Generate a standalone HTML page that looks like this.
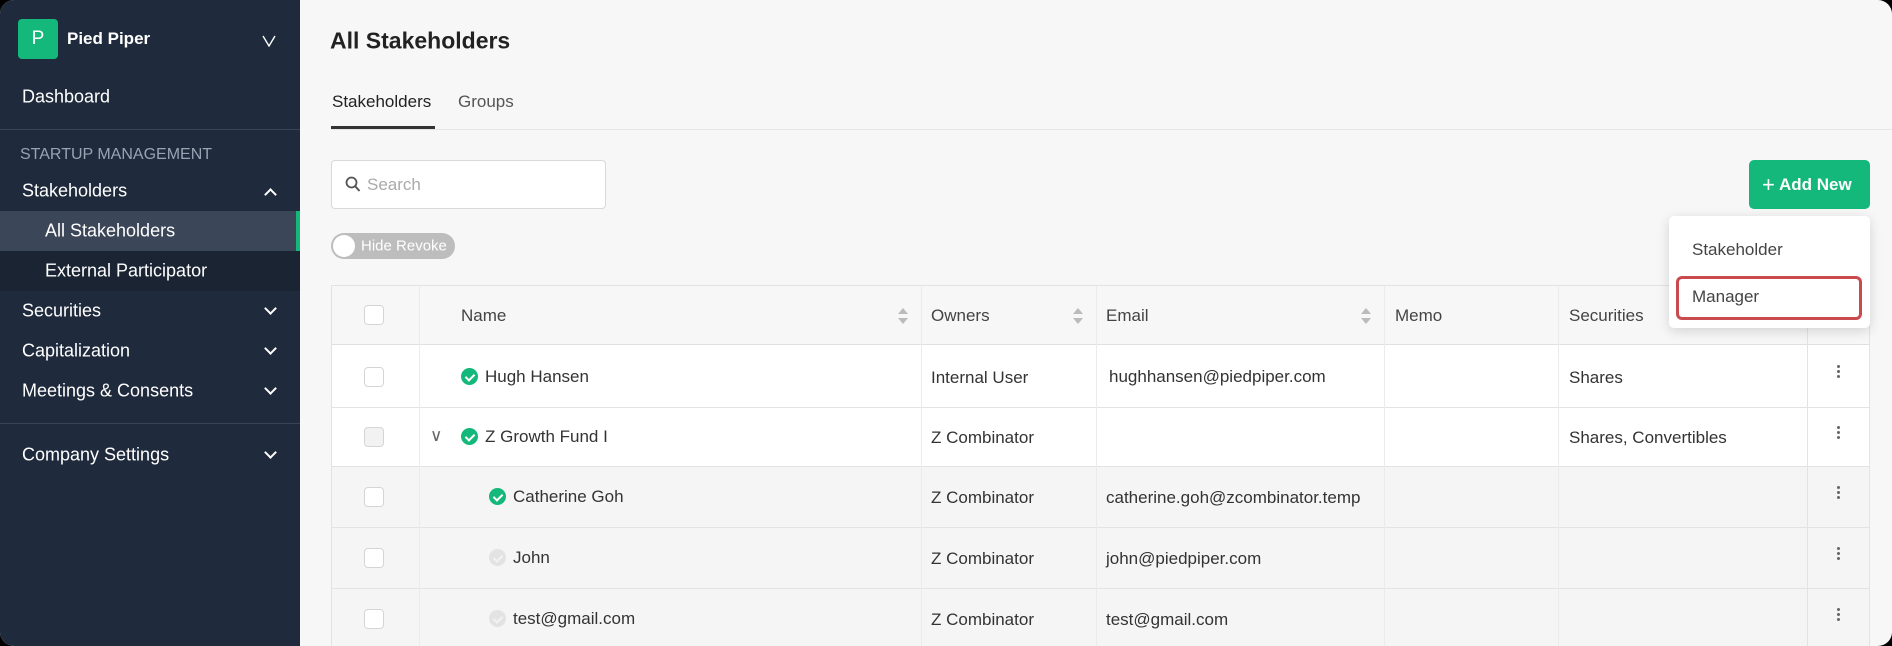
<!DOCTYPE html>
<html><head><meta charset="utf-8"><style>
*{box-sizing:border-box;margin:0;padding:0}
html,body{width:1892px;height:646px;overflow:hidden;background:#000}
body{font-family:"Liberation Sans",sans-serif;position:relative}
.win{position:absolute;left:0;top:0;width:1892px;height:646px;border-radius:14px;overflow:hidden;background:#f7f7f7}
.side{position:absolute;left:0;top:0;width:300px;height:646px;background:#1f2a3c;color:#fff}
.abs{position:absolute}
.si{position:absolute;left:22px;font-size:18px;color:#fff;transform:translateY(-50%)}
.chev{position:absolute;left:266px;width:9px;height:9px;border-right:2.5px solid #fff;border-bottom:2.5px solid #fff;transform:rotate(45deg)}
.chevu{transform:rotate(-135deg)}
.main{position:absolute;left:300px;top:0;right:0;bottom:0}
.t{position:absolute;transform:translateY(-50%);font-size:17px;color:#333;white-space:nowrap}
.cb{position:absolute;width:20px;height:20px;border:1px solid #d5d5d5;border-radius:4px;background:#fff}
.ok{display:inline-block;width:17px;height:17px;border-radius:50%;background:#14b87a;vertical-align:-3px;margin-right:7px;position:relative}
.ok:after{content:"";position:absolute;left:6px;top:3.5px;width:4px;height:7px;border-right:2px solid #fff;border-bottom:2px solid #fff;transform:rotate(45deg)}
.gr{background:#e3e3e3}
.gr:after{border-color:#f3f3f3}
.sort{position:absolute;width:8px;height:16px}
.sort:before{content:"";position:absolute;top:0;left:0;border:5px solid transparent;border-bottom:6px solid #bbb;border-top:0}
.sort:after{content:"";position:absolute;bottom:0;left:0;border:5px solid transparent;border-top:6px solid #bbb;border-bottom:0}
.dots{position:absolute;width:3px;height:3px;background:#666;border-radius:50%;box-shadow:0 5px 0 #666,0 10px 0 #666}
</style></head><body><div class="win">
<div class="side">
 <div class="abs" style="left:18px;top:19px;width:40px;height:40px;background:#14b87a;border-radius:4px;color:#fff;font-size:19px;line-height:40px;text-align:center">P</div>
 <div class="si" style="left:67px;top:39px;font-weight:bold;font-size:17px">Pied Piper</div>
 <svg class="abs" style="left:262px;top:35px" width="14" height="12" viewBox="0 0 14 12"><path d="M1 1l6 10 6-10" fill="none" stroke="#fff" stroke-width="1.4"/></svg>
 <div class="si" style="top:97px">Dashboard</div>
 <div class="abs" style="left:0;top:129px;width:300px;height:1px;background:#37445a"></div>
 <div class="si" style="top:155px;left:20px;font-size:16px;color:#9aa3b1">STARTUP MANAGEMENT</div>
 <div class="si" style="top:191px">Stakeholders</div><div class="chev chevu" style="top:190px"></div>
 <div class="abs" style="left:0;top:211px;width:300px;height:80px;background:#1a2433"></div>
 <div class="abs" style="left:0;top:211px;width:300px;height:40px;background:#3b4658"></div>
 <div class="abs" style="left:296px;top:211px;width:4px;height:40px;background:#14b87a"></div>
 <div class="si" style="left:45px;top:231px">All Stakeholders</div>
 <div class="si" style="left:45px;top:271px">External Participator</div>
 <div class="si" style="top:311px">Securities</div><div class="chev" style="top:304px"></div>
 <div class="si" style="top:351px">Capitalization</div><div class="chev" style="top:344px"></div>
 <div class="si" style="top:391px">Meetings &amp; Consents</div><div class="chev" style="top:384px"></div>
 <div class="abs" style="left:0;top:423px;width:300px;height:1px;background:#37445a"></div>
 <div class="si" style="top:455px">Company Settings</div><div class="chev" style="top:448px"></div>
</div>
<div class="main">
 <div class="t" style="left:30px;top:41px;font-size:23px;color:#222;font-weight:bold">All Stakeholders</div>
 <div class="t" style="left:32px;top:102px;color:#222">Stakeholders</div>
 <div class="t" style="left:158px;top:102px;color:#555">Groups</div>
 <div class="abs" style="left:31px;top:129px;width:1561px;height:1px;background:#e6e6e6"></div>
 <div class="abs" style="left:31px;top:126px;width:104px;height:3px;background:#333"></div>
 <div class="abs" style="left:31px;top:160px;width:275px;height:49px;background:#fff;border:1px solid #d9d9d9;border-radius:4px"></div>
 <svg class="abs" style="left:45px;top:176px" width="16" height="17" viewBox="0 0 16 17"><circle cx="6.5" cy="6.5" r="5" fill="none" stroke="#555" stroke-width="1.8"/><path d="M10 10l4.5 5" stroke="#555" stroke-width="2"/></svg>
 <div class="t" style="left:67px;top:185px;color:#aaa">Search</div>
 <div class="abs" style="left:31px;top:233px;width:124px;height:26px;background:#bdbdbd;border-radius:13px"></div>
 <div class="abs" style="left:33px;top:235px;width:22px;height:22px;background:#fff;border-radius:50%"></div>
 <div class="t" style="left:61px;top:246px;color:#fff;font-size:15px">Hide Revoke</div>
 <div class="abs" style="left:1449px;top:160px;width:121px;height:49px;background:#14b87a;border-radius:5px"></div>
 <div class="t" style="left:1462px;top:185px;color:#fff;font-weight:bold;font-size:17px"><span style="font-weight:normal;font-size:22px;vertical-align:-2px">+</span> Add New</div>
 <div class="abs" style="left:31px;top:285px;width:1539px;height:361px;background:#fff;border:1px solid #e3e3e3;border-bottom:0"></div>
 <div class="abs" style="left:32px;top:286px;width:1537px;height:59px;background:#f7f7f7;border-bottom:1px solid #e0e0e0"></div>
 <div class="abs" style="left:32px;top:466px;width:1537px;height:180px;background:#f5f5f5"></div>
 <div class="abs" style="left:32px;top:407px;width:1537px;height:1px;background:#e3e3e3"></div>
 <div class="abs" style="left:32px;top:466px;width:1537px;height:1px;background:#e3e3e3"></div>
 <div class="abs" style="left:32px;top:527px;width:1537px;height:1px;background:#e3e3e3"></div>
 <div class="abs" style="left:32px;top:588px;width:1537px;height:1px;background:#e3e3e3"></div>
 <div class="abs" style="left:119px;top:286px;width:1px;height:360px;background:#ebebeb"></div>
 <div class="abs" style="left:621px;top:286px;width:1px;height:360px;background:#ebebeb"></div>
 <div class="abs" style="left:796px;top:286px;width:1px;height:360px;background:#ebebeb"></div>
 <div class="abs" style="left:1084px;top:286px;width:1px;height:360px;background:#ebebeb"></div>
 <div class="abs" style="left:1258px;top:286px;width:1px;height:360px;background:#ebebeb"></div>
 <div class="abs" style="left:1507px;top:286px;width:1px;height:360px;background:#e3e3e3;box-shadow:-4px 0 8px rgba(0,0,0,.06)"></div>
 <div class="cb" style="left:64px;top:305px"></div>
 <div class="t" style="left:161px;top:316px;color:#444">Name</div><div class="sort" style="left:598px;top:308px"></div>
 <div class="t" style="left:631px;top:316px;color:#444">Owners</div><div class="sort" style="left:773px;top:308px"></div>
 <div class="t" style="left:806px;top:316px;color:#444">Email</div><div class="sort" style="left:1061px;top:308px"></div>
 <div class="t" style="left:1095px;top:316px;color:#444">Memo</div>
 <div class="t" style="left:1269px;top:316px;color:#444">Securities</div>
 <div class="cb" style="left:64px;top:367px"></div>
 <div class="t" style="left:161px;top:377px"><span class="ok"></span>Hugh Hansen</div>
 <div class="t" style="left:631px;top:378px">Internal User</div>
 <div class="t" style="left:809px;top:377px">hughhansen@piedpiper.com</div>
 <div class="t" style="left:1269px;top:378px">Shares</div>
 <div class="dots" style="left:1537px;top:365px"></div>
 <div class="cb" style="left:64px;top:427px;background:#f2f2f2"></div>
 <div class="t" style="left:130px;top:436px;color:#666">∨</div>
 <div class="t" style="left:161px;top:437px"><span class="ok"></span>Z Growth Fund I</div>
 <div class="t" style="left:631px;top:438px">Z Combinator</div>
 <div class="t" style="left:1269px;top:438px">Shares, Convertibles</div>
 <div class="dots" style="left:1537px;top:426px"></div>
 <div class="cb" style="left:64px;top:487px"></div>
 <div class="t" style="left:189px;top:497px"><span class="ok"></span>Catherine Goh</div>
 <div class="t" style="left:631px;top:498px">Z Combinator</div>
 <div class="t" style="left:806px;top:498px">catherine.goh@zcombinator.temp</div>
 <div class="dots" style="left:1537px;top:486px"></div>
 <div class="cb" style="left:64px;top:548px"></div>
 <div class="t" style="left:189px;top:558px"><span class="ok gr"></span>John</div>
 <div class="t" style="left:631px;top:559px">Z Combinator</div>
 <div class="t" style="left:806px;top:559px">john@piedpiper.com</div>
 <div class="dots" style="left:1537px;top:547px"></div>
 <div class="cb" style="left:64px;top:609px"></div>
 <div class="t" style="left:189px;top:619px"><span class="ok gr"></span>test@gmail.com</div>
 <div class="t" style="left:631px;top:620px">Z Combinator</div>
 <div class="t" style="left:806px;top:620px">test@gmail.com</div>
 <div class="dots" style="left:1537px;top:608px"></div>
 <div class="abs" style="left:1369px;top:216px;width:201px;height:112px;background:#fff;border-radius:5px;box-shadow:0 3px 12px rgba(0,0,0,.15)"></div>
 <div class="t" style="left:1392px;top:250px;color:#444">Stakeholder</div>
 <div class="abs" style="left:1376px;top:276px;width:186px;height:44px;border:3px solid #c94b4f;border-radius:6px"></div>
 <div class="t" style="left:1392px;top:297px;color:#444">Manager</div>
</div>
</div></body></html>
